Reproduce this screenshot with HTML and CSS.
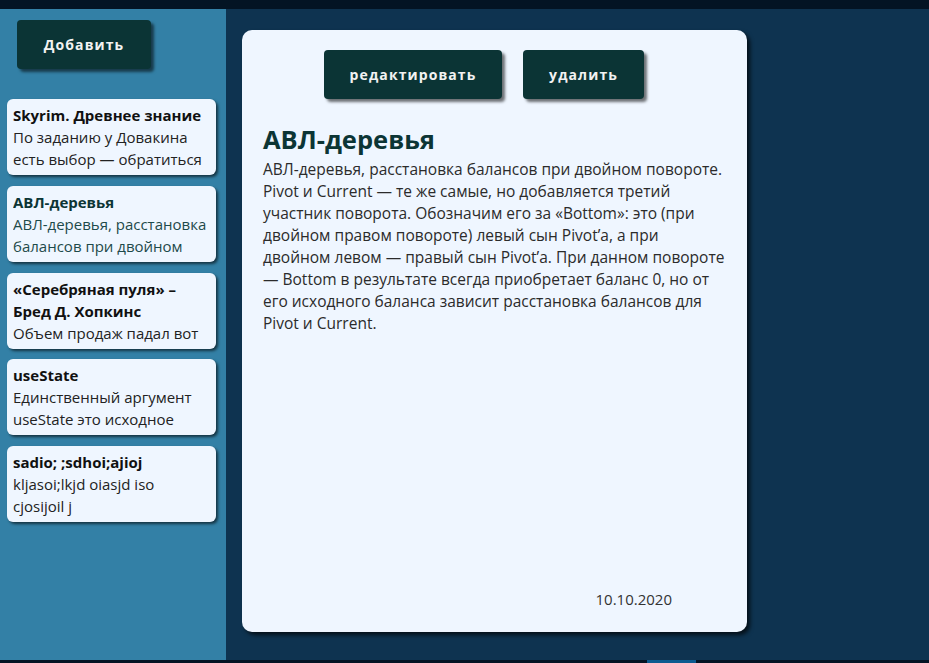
FILE: index.html
```html
<!DOCTYPE html>
<html lang="ru">
<head>
<meta charset="utf-8">
<title>Заметки</title>
<link rel="stylesheet" href="styles.css">
</head>
<body>
<div class="topbar"></div>
<div class="app">
  <aside class="sidebar">
    <button class="btn btn-add">Добавить</button>
    <ul class="notes">
      <li class="note">
        <div class="note-clip">
          <div class="note-title">Skyrim. Древнее знание</div>
          <div class="note-text">По заданию у Довакина есть выбор — обратиться к Септимию Сегонию</div>
        </div>
      </li>
      <li class="note active">
        <div class="note-clip">
          <div class="note-title">АВЛ-деревья</div>
          <div class="note-text">АВЛ-деревья, расстановка балансов при двойном повороте.</div>
        </div>
      </li>
      <li class="note">
        <div class="note-clip">
          <div class="note-title">«Серебряная пуля» – Бред Д. Хопкинс</div>
          <div class="note-text">Объем продаж падал вот уже третий квартал</div>
        </div>
      </li>
      <li class="note">
        <div class="note-clip">
          <div class="note-title">useState</div>
          <div class="note-text">Единственный аргумент useState это исходное состояние</div>
        </div>
      </li>
      <li class="note">
        <div class="note-clip">
          <div class="note-title">sadio; ;sdhoi;ajioj</div>
          <div class="note-text">kljasoi;lkjd oiasjd iso cjosijoil j</div>
        </div>
      </li>
    </ul>
  </aside>
  <main class="main">
    <article class="card">
      <div class="actions">
        <button class="btn btn-edit">редактировать</button>
        <button class="btn btn-del">удалить</button>
      </div>
      <h1 class="card-title">АВЛ-деревья</h1>
      <p class="card-text">АВЛ-деревья, расстановка балансов при двойном повороте. Pivot и Current — те же самые, но добавляется третий участник поворота. Обозначим его за «Bottom»: это (при двойном правом повороте) левый сын Pivot’a, а при двойном левом — правый сын Pivot’a. При данном повороте — Bottom в результате всегда приобретает баланс 0, но от его исходного баланса зависит расстановка балансов для Pivot и Current.</p>
      <div class="card-footer"><span class="date">10.10.2020</span></div>
    </article>
  </main>
</div>
<div class="bottombar"><div class="thumb"></div></div>
</body>
</html>
```

FILE: styles.css
```css
* { box-sizing: border-box; }
html, body { height: 100%; }
body {
  margin: 0;
  font-family: "Open Sans", "Noto Sans", sans-serif;
  background: #0e3350;
  display: flex;
  flex-direction: column;
  overflow: hidden;
}
.topbar {
  height: 9px;
  background: #031424;
  flex: none;
}
.app {
  flex: 1;
  display: flex;
  min-height: 0;
}
.sidebar {
  width: 226px;
  flex: none;
  background: #3380a6;
  padding: 11px 10px 0 7px;
}
.btn {
  font-family: "Open Sans", "Noto Sans", sans-serif;
  background: #0b3435;
  color: #f2f2f2;
  border: none;
  border-radius: 4px;
  font-weight: 700;
  font-size: 14px;
  letter-spacing: 1.1px;
  height: 49px;
  box-shadow: 3px 3px 3px rgba(0,0,0,0.55);
  cursor: pointer;
}
.btn-add {
  width: 134px;
  margin-left: 10px;
}
.notes {
  list-style: none;
  margin: 30px 0 0;
  padding: 0;
  display: flex;
  flex-direction: column;
  gap: 10.75px;
}
.note {
  background: #eff6ff;
  border-radius: 6px;
  padding: 5px 8px 5px 6px;
  height: 76px;
  box-shadow: 2px 2px 3px rgba(0,0,0,0.6);
  font-size: 15px;
  line-height: 22px;
  color: #222;
}
.note-clip {
  height: 66px;
  overflow: hidden;
}
.note-title {
  font-weight: 700;
  color: #111;
}
.note.active .note-title { color: #0c3535; }
.note.active .note-text { color: #1e4a4a; }
.main {
  flex: 1;
  padding: 21px 0 0 16px;
}
.card {
  width: 505px;
  height: 602px;
  background: #eff6ff;
  border-radius: 10px;
  box-shadow: 3px 3px 4px rgba(0,0,0,0.7);
  padding: 20px 20px 0 21px;
  display: flex;
  flex-direction: column;
}
.actions {
  display: flex;
  justify-content: center;
  gap: 21px;
  padding-right: 22px;
}
.btn-edit { width: 178px; }
.btn-del { width: 121px; }
.card-title {
  margin: 24px 0 0;
  font-size: 25.5px;
  line-height: 33px;
  font-weight: 700;
  color: #0c3535;
}
.card-text {
  margin: 2px 0 0;
  font-size: 15.5px;
  line-height: 22px;
  color: #2b2b2b;
}
.card-footer {
  margin-top: auto;
  padding: 0 55px 22px 0;
  display: flex;
  justify-content: flex-end;
}
.date {
  font-size: 15px;
  line-height: 22px;
  color: #333;
}
.bottombar {
  height: 3px;
  background: #031424;
  flex: none;
  display: flex;
}
.thumb {
  width: 49px;
  margin-left: 647px;
  background: #0c5a8f;
}
```
